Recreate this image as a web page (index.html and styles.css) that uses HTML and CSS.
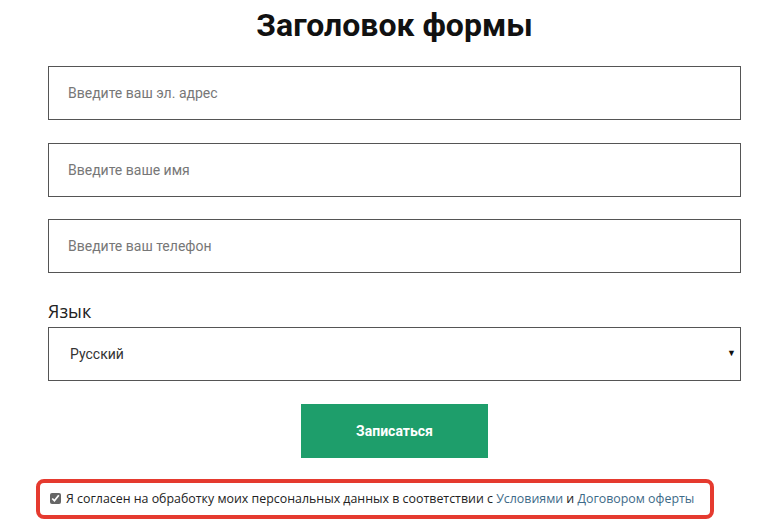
FILE: index.html
```html
<!DOCTYPE html>
<html lang="ru">
<head>
  <meta charset="UTF-8" />
  <title>Заголовок формы</title>
  <link rel="stylesheet" href="styles.css">
</head>
<body>
  <form class="signup">
    <h1 class="signup-title">Заголовок формы</h1>
    <input type="email" class="field" placeholder="Введите ваш эл. адрес" />
    <input type="text" class="field" placeholder="Введите ваше имя" />
    <input type="tel" class="field" placeholder="Введите ваш телефон" />
    <label class="lang-label" for="lang">Язык</label>
    <div class="select-wrap">
      <select id="lang" class="field select">
        <option>Русский</option>
        <option>English</option>
      </select>
      <span class="select-arrow">&#9660;</span>
    </div>
    <div class="actions">
      <button type="submit" class="submit">Записаться</button>
    </div>
    <div class="agree">
      <input type="checkbox" class="agree-check" checked />
      <span>Я согласен на обработку моих персональных данных в соответствии с <a href="#">Условиями</a> и <a href="#">Договором оферты</a></span>
    </div>
  </form>
</body>
</html>
```

FILE: styles.css
```css
body {
  margin: 0;
  background: #fff;
  font-family: Roboto, "Liberation Sans", sans-serif;
}
.signup {
  width: 693px;
  margin-left: 48px;
  display: flex;
  flex-direction: column;
}
.signup-title {
  margin: 6px 0 22px;
  text-align: center;
  font-size: 32px;
  font-weight: 700;
  color: #111;
  line-height: 38px;
}
.field {
  box-sizing: border-box;
  height: 54px;
  width: 100%;
  border: 1px solid #555;
  border-radius: 0;
  padding: 0 19px;
  font-family: Roboto, "Liberation Sans", sans-serif;
  font-size: 14px;
  color: #333;
  background: #fff;
  margin-bottom: 22.5px;
  outline: none;
}
.field::placeholder {
  color: #777;
}
.lang-label {
  font-family: "Open Sans", sans-serif;
  font-size: 18px;
  color: #222;
  margin: 3px 0 4px;
  line-height: 24px;
}
.select-wrap {
  position: relative;
}
.select {
  appearance: none;
  padding-left: 21px;
  margin-bottom: 23px;
  display: block;
}
.select-arrow {
  position: absolute;
  right: 5px;
  top: 21px;
  font-size: 9px;
  color: #111;
  pointer-events: none;
}
.actions {
  display: flex;
  justify-content: center;
}
.submit {
  width: 187px;
  height: 54px;
  background: #1e9e6b;
  color: #fff;
  border: none;
  font-family: Roboto, "Liberation Sans", sans-serif;
  font-weight: 700;
  font-size: 14px;
  cursor: pointer;
}
.agree {
  margin: 21px 0 0 -12px;
  width: 678px;
  box-sizing: border-box;
  border: 4px solid #e53a2f;
  border-radius: 8px;
  padding: 7px 6px 8px 10px;
  display: flex;
  align-items: center;
  gap: 5px;
  font-family: "Open Sans", sans-serif;
  font-size: 12.4px;
  color: #222;
  white-space: nowrap;
}
.agree-check {
  margin: 0;
  width: 11px;
  height: 11px;
  accent-color: #666;
}
.agree a {
  color: #3d6a88;
  text-decoration: none;
}
```
